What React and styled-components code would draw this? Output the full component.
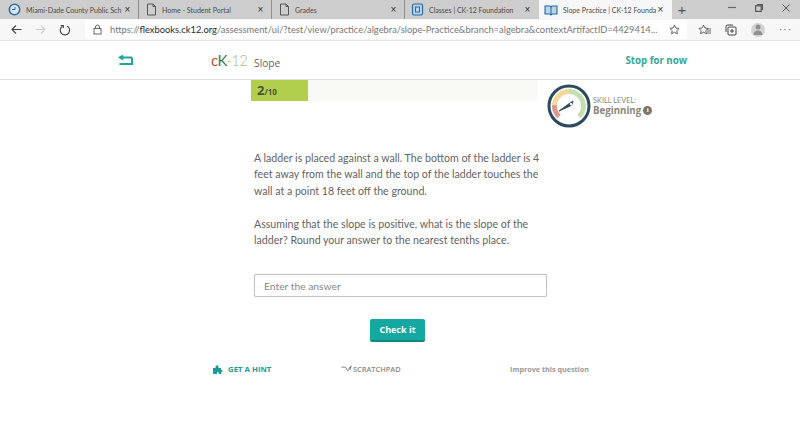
import React from 'react';
import styled, { createGlobalStyle } from 'styled-components';

const Global = createGlobalStyle`
  html, body { margin: 0; padding: 0; background: #fff; }
  body { width: 800px; height: 426px; overflow: hidden; font-family: "Open Sans", "Liberation Sans", sans-serif; }
  svg { flex: none; }
`;
const TabStrip = styled.div`
  height: 19px; background: #cdcdcd; display: flex; align-items: stretch;
`;
const Tab = styled.div`
  width: ${p => p.$w}px; flex: none; box-sizing: border-box; display: flex; align-items: center;
  padding: 0 6px 0 ${p => p.$pl ?? 8}px; gap: 5px; font: 7px "Lato", sans-serif; color: #4a4a4a;
  background: ${p => p.$active ? '#f7f7f7' : 'transparent'};
  border-right: 1px solid ${p => p.$sep ? '#8f8f8f' : 'transparent'};
`;
const TabTitle = styled.span`
  flex: 1; min-width: 0; white-space: nowrap;
`;
const TabClose = styled.span`
  font: 10px "Liberation Sans", sans-serif; color: #333; width: 9px; flex: none; text-align: center;
`;
const NewTab = styled.div`
  width: 20px; text-align: center; font: 15px/19px "Liberation Sans", sans-serif; color: #555;
`;
const WindowControls = styled.div`
  margin-left: auto; display: flex; align-items: center; gap: 19px; padding-right: 10px; height: 15px; color: #555;
`;
const Toolbar = styled.div`
  height: 22px; background: #f7f7f7; display: flex; align-items: center; box-sizing: border-box; border-bottom: 1px solid #e4e4e4;
`;
const NavButtons = styled.div`
  width: 85px; flex: none; display: flex; align-items: center; padding-left: 11px; gap: 13px; box-sizing: border-box;
`;
const UrlBox = styled.div`
  width: 602px; height: 19px; background: #fff; display: flex; align-items: center; flex: none; box-sizing: border-box;
  padding: 0 5px 0 8px; font: 9.35px "Lato", sans-serif; color: #777; border-radius: 2px;
`;
const UrlText = styled.span`
  flex: 1; margin-left: 8px; white-space: nowrap; 
  b { font-weight: 400; color: #2b2b2b; }
`;
const ToolIcons = styled.div`
  flex: 1; display: flex; align-items: center; padding-left: 11px; gap: 14px;
`;
const Avatar = styled.div`
  width: 14px; height: 14px; border-radius: 50%; background: #d3d3d3; display: flex; align-items: center; justify-content: center;
`;
const More = styled.span`
  font: 10px "Liberation Sans", sans-serif; color: #666; letter-spacing: 1px;
`;
const PageHeader = styled.header`
  height: 39px; box-sizing: border-box; border-bottom: 1px solid #dedede; display: flex; align-items: center; padding-left: 118px; padding-right: 113px;
`;
const Logo = styled.div`
  margin-left: 78px; font: 300 15px "Lato", sans-serif; color: #a8bd74; display: flex; align-items: baseline; letter-spacing: -.8px;
`;
const LogoC = styled.span` color: #b3573c; font-weight: 400; `;
const LogoK = styled.span` color: #3f7a45; font-weight: 400; `;
const Subject = styled.span`
  font: 10.2px "Open Sans", sans-serif; color: #666; margin-left: 7px; letter-spacing: 0; position: relative; top: 1px;
`;
const StopLink = styled.a`
  margin-left: auto; font: 700 9.7px "Open Sans", sans-serif; color: #2fa79a;
`;
const ProgressRow = styled.div`
  display: flex; align-items: flex-start; padding-left: 251px; height: 49px;
`;
const Track = styled.div`
  width: 287px; height: 21px; background: #f9f9f5; flex: none;
`;
const Fill = styled.div`
  height: 100%; background: #b1cf4c; box-sizing: border-box; padding-left: 6px; font: 700 13px/21px "Open Sans", sans-serif; color: #4a5236;
  small { font-size: 8px; }
`;
const Skill = styled.div`
  display: flex; align-items: center; margin: 4px 0 0 9px; gap: 2px;
`;
const SkillText = styled.div`
  display: flex; flex-direction: column; margin-top: 0; color: #8a8778;
`;
const SkillLabel = styled.span` font: 7.4px/9px "Lato", sans-serif; `;
const SkillValue = styled.span`
  font: 700 9.7px/11px "Open Sans", sans-serif; display: flex; align-items: center; gap: 2px;
`;
const Info = styled.span`
  width: 9px; height: 9px; border-radius: 50%; background: #7d7767; color: #fff; font: 700 7px/9px "Liberation Serif", serif; text-align: center;
`;
const Question = styled.section`
  margin: 21px 0 0 254px; width: 290px; font: 10.6px/16.4px "Lato", sans-serif; color: #636363;
  p { margin: 0 0 16.4px; }
`;
const AnswerBox = styled.input`
  display: block; margin: 26px 0 0 254px; width: 293px; height: 23px; box-sizing: border-box; border: 1px solid #c4c4c4;
  border-radius: 2px; padding: 0 9px; font: 10.3px "Lato", sans-serif; color: #666; outline: none; box-shadow: 0 0 1px #bbb;
  &::placeholder { color: #888; opacity: 1; }
`;
const CheckRow = styled.div`
  display: flex; padding-left: 370px; margin-top: 22px;
`;
const CheckButton = styled.button`
  width: 55px; height: 23px; border: 0; border-bottom: 2px solid #12877e; border-radius: 2px; background: #14a8a0; color: #fff;
  font: 700 9px "Open Sans", sans-serif; padding: 0;
`;
const Actions = styled.div`
  display: flex; align-items: center; padding-left: 213px; margin-top: 21px;
`;
const Action = styled.a`
  display: flex; align-items: center; gap: ${p => p.$gap ?? 4}px; width: ${p => p.$w}px; flex: none; white-space: nowrap;
  font: ${p => p.$weight ?? 700} ${p => p.$size ?? 7.8}px "Open Sans", sans-serif; color: ${p => p.$color};
`;

const Circle = () => (
  <svg width="13" height="13" viewBox="0 0 13 13"><circle cx="6.5" cy="6.5" r="5.2" fill="#dbe6f2" stroke="#2f6da8" strokeWidth="1.5"/><path d="M4 6.5h3V4" fill="none" stroke="#2f6da8"/></svg>
);
const Doc = () => (
  <svg width="11" height="13" viewBox="0 0 11 13" fill="none" stroke="#555" strokeWidth="1"><path d="M1.5 1h5.5l2.5 2.5v8.500h-8z"/><path d="M7 1v2.500h2.500"/></svg>
);
const Book = () => (
  <svg width="13" height="13" viewBox="0 0 13 13"><rect x="1.500" y="1" width="10" height="11" rx="1.500" fill="#b9d4ea" stroke="#2b6a9c" strokeWidth="1.200"/><rect x="4.500" y="4" width="4" height="5" fill="none" stroke="#2b6a9c"/></svg>
);
const OpenBook = () => (
  <svg width="14" height="12" viewBox="0 0 14 12"><path d="M1 2h5l1 1 1-1h5v8H8l-1 1-1-1H1z" fill="#b9d4ea" stroke="#2b6a9c" strokeWidth="1.100"/><path d="M7 3v7" stroke="#2b6a9c"/></svg>
);
const Arrow = ({ color, flip }) => (
  <svg width="11" height="11" viewBox="0 0 11 11" fill="none" stroke={color} strokeWidth="1.100" style={flip ? { transform: 'scaleX(-1)' } : undefined}><path d="M10.500 5.500H1M5 1.500l-4 4 4 4"/></svg>
);
const Refresh = () => (
  <svg width="12" height="12" viewBox="0 0 12 12" fill="none" stroke="#444" strokeWidth="1.100"><path d="M3.500 2.200A4.700 4.700 0 1 0 8 2"/><path d="M1.800 1.500h2.500v2.500"/></svg>
);
const Lock = () => (
  <svg width="9" height="11" viewBox="0 0 9 11" fill="none" stroke="#666" strokeWidth="1"><rect x="1" y="4.500" width="7" height="5.500"/><path d="M2.500 4.500V3a2 2 0 0 1 4 0v1.500"/></svg>
);
const Star = ({ lines }) => (
  <svg width="13" height="12" viewBox="0 0 13 12" fill="none" stroke="#555" strokeWidth=".9"><path d="M5.500 1l1.400 3 3.200.4-2.300 2.200.6 3.200-2.900-1.600-2.900 1.600.6-3.200L.9 4.400l3.200-.4z"/>{lines && <path d="M9 5h4M9 7h4M9 9h4"/>}</svg>
);
const Collections = () => (
  <svg width="12" height="12" viewBox="0 0 12 12" fill="none" stroke="#444" strokeWidth="1"><rect x="3" y="3" width="8" height="8" rx="1"/><path d="M1 8V2.500A1.500 1.500 0 0 1 2.500 1H8M7 5v4M5 7h4"/></svg>
);
const Person = () => (
  <svg width="10" height="11" viewBox="0 0 10 11" fill="#8f8f8f"><circle cx="5" cy="3" r="2.500"/><path d="M0.500 11c0-3 2-4.500 4.500-4.500s4.500 1.500 4.500 4.500z"/></svg>
);
const Minimize = () => <svg width="8" height="7" viewBox="0 0 8 7"><path d="M0 3.500h8" stroke="#666" strokeWidth="1.200"/></svg>;
const Restore = () => <svg width="8" height="8" viewBox="0 0 8 8" fill="none" stroke="#555" strokeWidth="1.200"><rect x=".6" y="1.800" width="5.600" height="5.600"/><path d="M2 .6h5.400V6"/></svg>;
const CloseX = () => <svg width="8" height="8" viewBox="0 0 8 8" stroke="#555" strokeWidth="1"><path d="M.5.500l7 7M7.500.500l-7 7"/></svg>;
const BackIcon = () => (
  <svg width="15" height="11" viewBox="0 0 15 11" fill="none" stroke="#22a5a0" strokeWidth="2"><path d="M14 2.500H2.500M5 .5L1.800 2.500 5 4.500"/><path d="M1.500 9h12.500V2.500"/></svg>
);
const Gauge = () => (
  <svg width="44" height="44" viewBox="0 0 44 44" fill="none">
    <circle cx="22" cy="22" r="20" stroke="#2c4a5e" strokeWidth="3"/>
    <path d="M12 32.500A14.500 14.500 0 0 1 7.500 21" stroke="#d89a90" strokeWidth="5"/>
    <path d="M7.500 21A14.500 14.500 0 0 1 22 7.500" stroke="#f3d999" strokeWidth="5"/>
    <path d="M22 7.500A14.500 14.500 0 0 1 32 32.500" stroke="#c4e0ae" strokeWidth="5"/>
    <path d="M12 27l11-8 3-2-1 3.500-3 2z" fill="#2c4a5e" stroke="#2c4a5e"/>
    <circle cx="24" cy="20" r="1.200" fill="#fff"/>
  </svg>
);
const Puzzle = () => (
  <svg width="11" height="11" viewBox="0 0 11 11" fill="#1c9c96"><path d="M0 5h2.500V3.800a1.500 1.500 0 1 1 3 0V5H8v2h1.200v2H8v2H5.500V9h-1.500v2H0z"/></svg>
);
const Squiggle = () => (
  <svg width="12" height="8" viewBox="0 0 13 8" fill="none" stroke="#777" strokeWidth="1"><path d="M.5 2h4c1.500 0 1.500 4 3 4 1 0 1-3 2-4"/><path d="M11 .5l-1.500 4" strokeWidth="1.300"/></svg>
);

export default function App() {
  return (
    <>
      <Global />
      <TabStrip>
        <Tab $w={139} $sep><Circle /><TabTitle>Miami-Dade County Public Sch</TabTitle><TabClose>×</TabClose></Tab>
        <Tab $w={133} $sep $pl={7}><Doc /><TabTitle>Home - Student Portal</TabTitle><TabClose>×</TabClose></Tab>
        <Tab $w={133} $sep $pl={7}><Doc /><TabTitle>Grades</TabTitle><TabClose>×</TabClose></Tab>
        <Tab $w={134} $pl={6}><Book /><TabTitle>Classes | CK-12 Foundation</TabTitle><TabClose>×</TabClose></Tab>
        <Tab $w={133} $active $pl={5}><OpenBook /><TabTitle>Slope Practice | CK-12 Founda</TabTitle><TabClose>×</TabClose></Tab>
        <NewTab>+</NewTab>
        <WindowControls><Minimize /><Restore /><CloseX /></WindowControls>
      </TabStrip>
      <Toolbar>
        <NavButtons><Arrow color="#444" /><Arrow color="#cfcfcf" flip /><Refresh /></NavButtons>
        <UrlBox>
          <Lock />
          <UrlText>https://<b>flexbooks.ck12.org</b>/assessment/ui/?test/view/practice/algebra/slope-Practice&amp;branch=algebra&amp;contextArtifactID=4429414...</UrlText>
          <Star />
        </UrlBox>
        <ToolIcons><Star lines /><Collections /><Avatar><Person /></Avatar><More>···</More></ToolIcons>
      </Toolbar>
      <PageHeader>
        <BackIcon />
        <Logo><LogoC>c</LogoC><LogoK>K</LogoK>-12<Subject>Slope</Subject></Logo>
        <StopLink>Stop for now</StopLink>
      </PageHeader>
      <main>
        <ProgressRow>
          <Track><Fill style={{ width: `${(2 / 10) * 100}%` }}>2<small>/10</small></Fill></Track>
          <Skill>
            <Gauge />
            <SkillText>
              <SkillLabel>SKILL LEVEL:</SkillLabel>
              <SkillValue>Beginning <Info>i</Info></SkillValue>
            </SkillText>
          </Skill>
        </ProgressRow>
        <Question>
          <p>A ladder is placed against a wall. The bottom of the ladder is 4 feet away from the wall and the top of the ladder touches the wall at a point 18 feet off the ground.</p>
          <p>Assuming that the slope is positive, what is the slope of the ladder? Round your answer to the nearest tenths place.</p>
        </Question>
        <AnswerBox placeholder="Enter the answer" />
        <CheckRow><CheckButton>Check it</CheckButton></CheckRow>
        <Actions>
          <Action $w={128} $color="#1c9c96"><Puzzle />GET A HINT</Action>
          <Action $w={169} $color="#888" $gap={0} $weight={600} $size={7.4}><Squiggle />SCRATCHPAD</Action>
          <Action $w={90} $color="#999" $size={7.2}>Improve this question</Action>
        </Actions>
      </main>
    </>
  );
}
